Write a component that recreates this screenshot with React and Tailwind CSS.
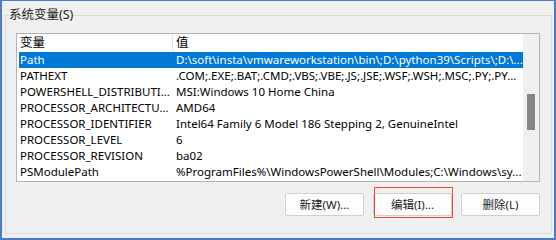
const rows = [
  { name: "Path", value: "D:\\soft\\insta\\vmwareworkstation\\bin\\;D:\\python39\\Scripts\\;D:\\...", selected: true },
  { name: "PATHEXT", value: ".COM;.EXE;.BAT;.CMD;.VBS;.VBE;.JS;.JSE;.WSF;.WSH;.MSC;.PY;.PY..." },
  { name: "POWERSHELL_DISTRIBUTI...", value: "MSI:Windows 10 Home China" },
  { name: "PROCESSOR_ARCHITECTU...", value: "AMD64" },
  { name: "PROCESSOR_IDENTIFIER", value: "Intel64 Family 6 Model 186 Stepping 2, GenuineIntel" },
  { name: "PROCESSOR_LEVEL", value: "6" },
  { name: "PROCESSOR_REVISION", value: "ba02" },
  { name: "PSModulePath", value: "%ProgramFiles%\\WindowsPowerShell\\Modules;C:\\Windows\\sy..." },
];

const WinButton = ({ children }) => (
  <button className="block w-[79px] h-[23px] bg-[#fdfdfd] border border-[#d0d0d0] rounded-[2px] text-[11.5px] text-[#1a1a1a] leading-none whitespace-nowrap">
    {children}
  </button>
);

export default function App() {
  return (
    <div
      className="w-[556px] h-[240px] bg-[#f0f0f0] border-x-2 border-b-2 border-t border-[#4a7bd0] text-black"
      style={{ fontFamily: '"Noto Sans", "Noto Sans CJK SC", sans-serif' }}
    >
      <fieldset className="ml-[3px] mr-[2px] mt-[6px] h-[227px] border border-[#dcdcdc] p-0">
        <legend className="ml-[3px] px-0 text-[12.5px] leading-[16px] text-[#1a1a1a]">
          系统变量(S)
        </legend>

        <div className="ml-[10px] mt-[10px] w-[524px] h-[149px] bg-white border border-[#b4b4b4] flex text-[11.5px]">
          <div className="flex-1 min-w-0 overflow-hidden flex flex-col">
            <div className="flex h-[18px] items-center text-[12.5px]">
              <div className="w-[156px] pl-[3px] border-r border-[#e5e5e5] h-full flex items-center">变量</div>
              <div className="pl-[3px]">值</div>
            </div>
            {rows.map((r) => (
              <div
                key={r.name}
                className={`flex h-[16px] items-center whitespace-nowrap ${
                  r.selected ? "bg-[#0078d7] text-white ml-[2px]" : ""
                }`}
              >
                <div className={`${r.selected ? "w-[154px] pl-[1px]" : "w-[156px] pl-[3px]"} shrink-0 overflow-hidden`}>{r.name}</div>
                <div className="pl-[3px] min-w-0 overflow-hidden">{r.value}</div>
              </div>
            ))}
          </div>
          <div className="w-[16px] shrink-0 bg-[#f0f0f0] flex justify-center">
            <div className="mt-[60px] w-[8px] h-[36px] bg-[#858585]" />
          </div>
        </div>

        <div className="flex justify-end gap-[9px] mr-[11px] mt-[11px]">
          <WinButton>新建(W)...</WinButton>
          <div className="relative flex">
            <WinButton>编辑(I)...</WinButton>
            <div className="absolute left-[1px] -right-[1px] -top-[6px] -bottom-[2px] border-[1.5px] border-[#e84a35]" />
          </div>
          <WinButton>删除(L)</WinButton>
        </div>
      </fieldset>
    </div>
  );
}
